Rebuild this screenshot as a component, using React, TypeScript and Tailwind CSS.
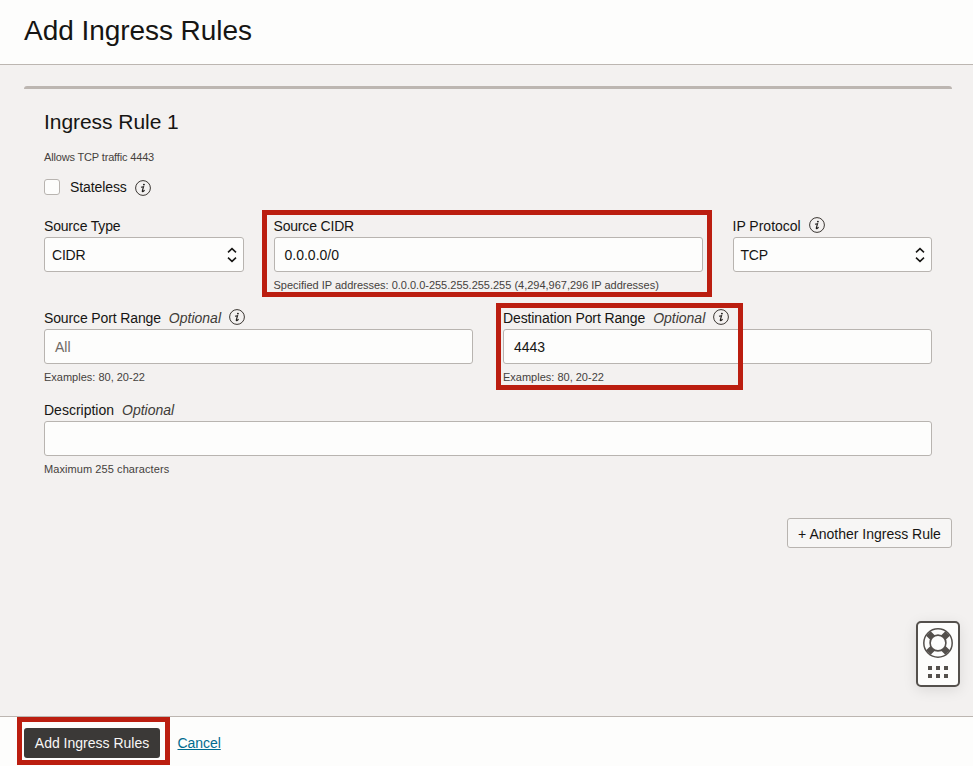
import type { ReactNode } from "react";

function InfoIcon({ className = "" }: { className?: string }) {
  return (
    <svg width="16" height="16" viewBox="0 0 16 16" className={`shrink-0 ${className}`} fill="none">
      <circle cx="8" cy="8" r="7.4" stroke="#3a3632" strokeWidth="1" />
      <circle cx="8.9" cy="4.6" r="0.95" fill="#201e1c" />
      <path d="M6 7.3L8.5 6.7L7.3 11Q7.2 12 8.1 11.5L9.6 10.2" stroke="#201e1c" strokeWidth="1.15" />
    </svg>
  );
}

function Chevrons() {
  return (
    <svg width="10" height="16" viewBox="0 0 10 16" fill="none" stroke="#161513" strokeWidth="1.5">
      <path d="M1 5.4L5 1.6L9 5.4M1 10.6L5 14.4L9 10.6" />
    </svg>
  );
}

type FieldProps = {
  label: string;
  labelClass?: string;
  optional?: boolean;
  info?: boolean;
  hint?: string;
  hintClass?: string;
  wide?: string;
  children: ReactNode;
};

function Field({ label, labelClass = "", optional, info, hint, hintClass = "", wide = "", children }: FieldProps) {
  return (
    <div className={`h-[92px] ${wide}`}>
      <div className="flex h-[20px] items-center whitespace-nowrap text-[14px] leading-[20px]">
        <span className={labelClass}>{label}</span>
        {optional && <span className="ml-2 italic text-[#403c38]">Optional</span>}
        {info && <InfoIcon className="-mt-[2px] ml-[8px]" />}
      </div>
      <div className="mt-px flex h-[35px] items-center rounded-[3px] border border-[#b8b4b0] bg-[#fdfdfc] text-[14px]">
        {children}
      </div>
      {hint && (
        <p className={`mt-[6px] whitespace-nowrap text-[11px] leading-[14px] text-[#45413d] ${hintClass}`}>{hint}</p>
      )}
    </div>
  );
}

function SelectValue({ value, className = "" }: { value: string; className?: string }) {
  return (
    <div className="flex w-full items-center justify-between pl-[7px] pr-[6px] pt-px">
      <span className={`pt-px ${className}`}>{value}</span>
      <Chevrons />
    </div>
  );
}

function HelpWidget() {
  return (
    <div className="absolute left-[916px] top-[621px] flex h-[66px] w-[44px] flex-col items-center rounded-[5px] border-2 border-[#54504c] bg-[#fdfdfc] pt-[5px] shadow-[0_3px_14px_rgba(0,0,0,0.1)]">
      <svg width="30" height="30" viewBox="0 0 30 30" fill="none" stroke="#54504c">
        <path d="M5.4 5.4L10 10M24.6 5.4L20 10M5.4 24.6L10 20M24.6 24.6L20 20" strokeWidth="6.4" />
        <circle cx="15" cy="15" r="14.2" strokeWidth="1.5" />
        <circle cx="15" cy="15" r="7.9" strokeWidth="1.6" fill="#fdfdfc" />
      </svg>
      <div className="mt-[8px] grid grid-cols-3 gap-[4px]">
        {[0, 1, 2, 3, 4, 5].map((n) => (
          <span key={n} className="h-[4px] w-[4px] bg-[#54504c]" />
        ))}
      </div>
    </div>
  );
}

export default function App() {
  return (
    <div className="relative flex h-[766px] w-[973px] flex-col overflow-hidden bg-[#f3f1f0] font-['Liberation_Sans',Arial,sans-serif] text-[#161513]">
      <header className="h-[65px] shrink-0 border-b border-[#bcb6b1] bg-[#fdfdfc] pl-6">
        <h1 className="text-[28px] leading-[62px] tracking-[-0.05px]">Add Ingress Rules</h1>
      </header>

      <main className="flex-1 pl-6 pr-[21px] pt-[21px]">
        <section>
          <div className="h-[3px] rounded-t-[3px] bg-[#bcb6b1]" />
          <div className="pl-5 pr-5 pt-[19px]">
            <h2 className="text-[21px] leading-[28px] tracking-[-0.05px]">Ingress Rule 1</h2>
            <p className="mt-[14px] text-[11px] leading-[14px] tracking-[-0.16px] text-[#45413d]">
              Allows TCP traffic 4443
            </p>
            <div className="mt-[13px] flex h-[20px] items-center text-[14px]">
              <span className="h-4 w-4 rounded-[3px] border border-[#b8b4b0] bg-[#fdfdfc]" />
              <span className="ml-[10px] tracking-[-0.1px]">Stateless</span>
              <InfoIcon className="ml-[8px] mt-px" />
            </div>
            <div className="mt-[19px] grid grid-cols-4 gap-x-[30px]">
              <Field label="Source Type" labelClass="tracking-[-0.18px]">
                <SelectValue value="CIDR" className="tracking-[-0.2px]" />
              </Field>
              <Field
                label="Source CIDR"
                labelClass="tracking-[-0.18px]"
                wide="col-span-2"
                hint="Specified IP addresses: 0.0.0.0-255.255.255.255 (4,294,967,296 IP addresses)"
                hintClass="tracking-[-0.01px]"
              >
                <span className="pl-[10px] pt-[2px]">0.0.0.0/0</span>
              </Field>
              <Field label="IP Protocol" info>
                <SelectValue value="TCP" className="tracking-[-0.2px]" />
              </Field>
              <Field
                label="Source Port Range"
                labelClass="tracking-[-0.13px]"
                optional
                info
                wide="col-span-2"
                hint="Examples: 80, 20-22"
              >
                <span className="pl-[10px] pt-[2px] text-[#6f6964]">All</span>
              </Field>
              <Field
                label="Destination Port Range"
                labelClass="tracking-[-0.12px]"
                optional
                info
                wide="col-span-2"
                hint="Examples: 80, 20-22"
              >
                <span className="pl-[10px] pt-[2px]">4443</span>
              </Field>
              <Field
                label="Description"
                optional
                wide="col-span-4"
                hint="Maximum 255 characters"
                hintClass="tracking-[0.08px]"
              >
                <span />
              </Field>
            </div>
          </div>
        </section>
        <div className="mt-[26px] flex justify-end">
          <button className="h-[30px] w-[165px] whitespace-nowrap rounded-[3px] border border-[#b8b4b0] bg-[#f7f6f5] pt-[2px] text-[14px]">
            + Another Ingress Rule
          </button>
        </div>
      </main>

      <footer className="flex h-[50px] shrink-0 items-start border-t border-[#bcb6b1] bg-[#fdfdfc] pl-6 pt-[11px]">
        <button className="h-[30px] w-[136px] whitespace-nowrap rounded-[3px] bg-[#3b3937] text-[14px] text-[#f8f7f6]">
          Add Ingress Rules
        </button>
        <a className="ml-[17.5px] text-[14px] leading-[30px] tracking-[-0.05px] text-[#006b8f] underline">Cancel</a>
      </footer>

      <HelpWidget />
      <div className="absolute left-[262px] top-[210px] h-[87px] w-[450px] border-[5px] border-[#bb1e10]" />
      <div className="absolute left-[496px] top-[303px] h-[87px] w-[247px] border-[5px] border-[#bb1e10]" />
      <div className="absolute left-[17px] top-[717px] h-[48px] w-[153px] border-[5px] border-[#bb1e10]" />
    </div>
  );
}
